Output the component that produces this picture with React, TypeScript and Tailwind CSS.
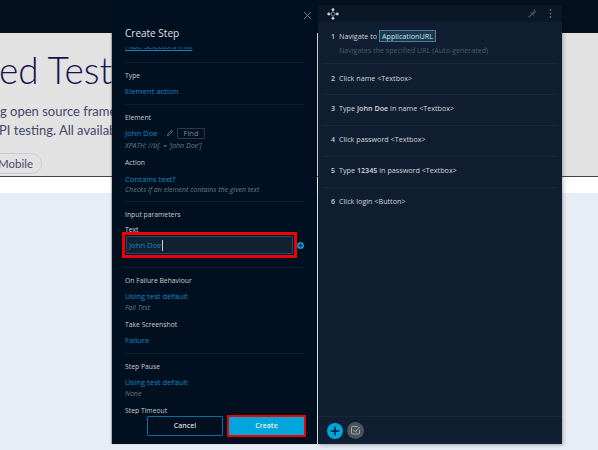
import React from "react";

const sans = "font-['Open_Sans','Noto_Sans',sans-serif]";

function Label({ children, className = "" }: { children: React.ReactNode; className?: string }) {
  return <div className={`text-[6.8px] leading-[12px] text-[#c6cbd0] whitespace-nowrap ${className}`}>{children}</div>;
}
function Value({ children, className = "" }: { children: React.ReactNode; className?: string }) {
  return <div className={`text-[7.7px] leading-[14px] text-[#0a8ac0] whitespace-nowrap ${className}`}>{children}</div>;
}
function Hint({ children, className = "" }: { children: React.ReactNode; className?: string }) {
  return <div className={`text-[7px] leading-[11px] italic text-[#6f7a85] whitespace-nowrap ${className}`}>{children}</div>;
}
function Rule({ className = "" }: { className?: string }) {
  return <div className={`h-px bg-[#0f2031] ${className}`} />;
}

function Step({ n, children, sub, className = "" }: { n: number; children: React.ReactNode; sub?: string; className?: string }) {
  return (
    <div className={`flex mx-[4px] pl-[9px] border-b border-[#16283a] ${className}`}>
      <div className="w-[8px] text-[7px] font-semibold leading-[13px] text-[#c9ced3]">{n}</div>
      <div className="min-w-0">
        <div className="text-[7.2px] leading-[13px] text-[#d3d7db] whitespace-nowrap">{children}</div>
        {sub && <div className="mt-[1px] text-[7.1px] leading-[12px] text-[#4c5a68] whitespace-nowrap">{sub}</div>}
      </div>
    </div>
  );
}

export default function App() {
  return (
    <div className={`relative w-[598px] h-[450px] overflow-hidden bg-[#e6edf6] ${sans}`}>
      {/* page behind the panels */}
      <div className="h-[33px] bg-[#04121f]" />
      <div className="h-[143px] bg-[#e2e2e2] overflow-hidden font-['Lato',sans-serif]">
        <div className="-ml-[1px] mt-[17px] text-[37px] leading-[40px] font-light text-[#17134f] whitespace-nowrap">ed Test</div>
        <div className="mt-[12px] text-[13px] leading-[19px] text-[#46466a] whitespace-nowrap">g open source framework</div>
        <div className="-ml-[1px] text-[13px] leading-[19px] text-[#46466a] whitespace-nowrap">PI testing. All available</div>
        <div className="mt-[13px] -ml-[30px] w-[72px] h-[21px] rounded-full border border-[#c9ccd6] pr-[8px] text-right text-[11.5px] leading-[19px] text-[#46466a]">Mobile</div>
      </div>
      <div className="h-px bg-[#3b4450]" />
      <div className="h-[16px] bg-white" />

      {/* create step modal */}
      <div className="absolute left-[112px] top-0 w-[205px] h-[444px] bg-[#001020] shadow-[-1px_0_1px_rgba(0,0,0,0.25)] flex flex-col">
        <div className="relative h-[47px] shrink-0 pl-[13px] pt-[25px] text-[10px] leading-[17px] text-[#dfe3e7]">
          Create Step
          <svg className="absolute right-[5px] top-[11px]" width="9" height="9" viewBox="0 0 9 9" fill="none" stroke="#9aa5af" strokeWidth="0.7"><path d="M1 1l7 7M8 1L1 8" /></svg>
        </div>
        <div className="flex-1 min-h-0 overflow-hidden px-[13px]">
          <div className="h-[5px] overflow-hidden">
            <div className="-mt-[7px] text-[7.7px] leading-[12px] text-[#0a8ac0] underline">Hide Selectors Info</div>
          </div>
          <Rule className="mt-[10px]" />
          <Label className="mt-[7px]">Type</Label>
          <Value className="mt-[2px]">Element action</Value>
          <Rule className="mt-[6px]" />
          <Label className="mt-[7px]">Element</Label>
          <div className="mt-[2px] flex items-center h-[14px]">
            <Value className="w-[41px]">John Doe</Value>
            <svg width="8" height="8" viewBox="0 0 8 8" fill="none" stroke="#7f8a95" strokeWidth="0.7"><path d="M1.5 6.8l.3-1.6L5.4 1.3l1.2 1.1L3 6.2zM4.6 2.2l1.2 1.1" /></svg>
            <div className="ml-[3px] w-[28px] h-[11px] border border-[#2b3a48] rounded-[1px] text-center text-[7.5px] leading-[9px] text-[#7d8892]">Find</div>
          </div>
          <Hint>XPATH: //b[. = 'John Doe']</Hint>
          <Label className="mt-[6px]">Action</Label>
          <Value className="mt-[3px]">Contains text?</Value>
          <Hint className="-mt-[2px]">Checks if an element contains the given text</Hint>
          <Rule className="mt-[6px]" />
          <Label className="mt-[7px]">Input parameters</Label>
          <Label className="mt-[3px] text-[#d3d7da]">Text</Label>
          <div className="relative -mt-[4px] -mx-[3px] w-[175px] h-[26px] border-[3px] border-[#f00000] p-[1px]">
            <div className="h-full w-[167px] bg-[#12212f] border border-[#1d4a7c] pl-[2px] text-[7.7px] leading-[14px] text-[#0a8ac0] flex items-center">
              John Doe<span className="w-px h-[11px] bg-[#c8d0d8]" />
            </div>
            <svg className="absolute -right-[10px] top-[7px]" width="7" height="7" viewBox="0 0 7 7"><circle cx="3.5" cy="3.5" r="3.5" fill="#0a95cf" /><path d="M3.5 1.5v4M1.5 3.5h4" stroke="#001020" strokeWidth="0.8" /></svg>
          </div>
          <Rule className="mt-[9px]" />
          <Label className="mt-[7px]">On Failure Behaviour</Label>
          <Value className="mt-[2px]">Using test default</Value>
          <Hint className="-mt-[1px]">Fail Test</Hint>
          <Label className="mt-[6px]">Take Screenshot</Label>
          <Value className="mt-[2px]">Failure</Value>
          <Rule className="mt-[6px]" />
          <Label className="mt-[7px]">Step Pause</Label>
          <Value className="mt-[2px]">Using test default</Value>
          <Hint className="-mt-[1px]">None</Hint>
          <Label className="mt-[6px]">Step Timeout</Label>
        </div>
        <div className="h-[30px] shrink-0 flex items-start pl-[35px] bg-[#001020]">
          <div className="mt-[2px] w-[76px] h-[20px] border border-[#0a6f9c] rounded-[1px] text-center text-[7px] leading-[18px] font-semibold text-[#d5dade]">Cancel</div>
          <div className="ml-[4px] mt-[1px] w-[79px] h-[22px] border-[2px] border-[#f00000] bg-[#00a5dc] text-center text-[7px] leading-[18px] font-semibold text-[#e8f6fb]">Create</div>
        </div>
      </div>

      {/* step list panel */}
      <div className="absolute left-[318px] top-[5px] w-[244px] h-[439px] bg-[#0f1e30] shadow-[1px_1px_4px_rgba(0,0,0,0.3)] flex flex-col">
        <div className="h-[17px] shrink-0 bg-[#091727] flex items-center px-[9px] justify-between">
          <svg width="12" height="12" viewBox="0 0 12 12" fill="#cfd4d9"><circle cx="6" cy="1.7" r="1.4" /><circle cx="6" cy="10.3" r="1.4" /><circle cx="1.7" cy="6" r="1.4" /><circle cx="10.3" cy="6" r="1.4" /><path d="M6 3.5L8.5 6 6 8.5 3.5 6z" fill="none" stroke="#cfd4d9" strokeWidth="0.7" /></svg>
          <div className="flex items-center gap-[12px] pr-[1px]">
            <svg width="9" height="9" viewBox="0 0 9 9" fill="none" stroke="#45525f" strokeWidth="1.1"><path d="M0.5 8.5l3-3M2.5 3.5l3 3M4.5 4.5l2.5-4M5 5l3-2.5" /></svg>
            <svg width="3" height="9" viewBox="0 0 3 9" fill="#5d6a76"><circle cx="1.5" cy="1" r="0.9" /><circle cx="1.5" cy="4.5" r="0.9" /><circle cx="1.5" cy="8" r="0.9" /></svg>
          </div>
        </div>
        <div className="flex-1 min-h-0 pt-[8px]">
          <Step n={1} sub="Navigates the specified URL (Auto-generated)" className="h-[34px]">
            <span className="font-medium">Navigate to</span>{" "}
            <span className="inline-block h-[12px] leading-[10px] px-[2px] border border-[#4d7d98] bg-[#173a4f] text-[#cfe0ea] text-[7.2px]">ApplicationURL</span>
          </Step>
          <Step n={2} className="h-[31px] pt-[8px]">Click name &lt;Textbox&gt;</Step>
          <Step n={3} className="h-[31px] pt-[7px]">Type <b className="font-semibold">John Doe</b> in name &lt;Textbox&gt;</Step>
          <Step n={4} className="h-[31px] pt-[7px]">Click password &lt;Textbox&gt;</Step>
          <Step n={5} className="h-[31px] pt-[7px]">Type <b className="font-semibold">12345</b> in password &lt;Textbox&gt;</Step>
          <Step n={6} className="h-[31px] pt-[7px] border-b-0">Click login &lt;Button&gt;</Step>
        </div>
        <div className="h-[28px] shrink-0 border-t border-[#16283a] flex items-center pl-[9px] gap-[4px]">
          <svg width="16" height="16" viewBox="0 0 16 16"><circle cx="8" cy="8" r="8" fill="#00a5dc" /><path d="M8 3.8v8.4M3.8 8h8.4" stroke="#0a1a2b" strokeWidth="1.4" /></svg>
          <svg width="17" height="17" viewBox="0 0 17 17"><circle cx="8.5" cy="8.5" r="8.5" fill="#4a545f" /><path d="M12.5 8v3a1 1 0 0 1-1 1h-6a1 1 0 0 1-1-1V5.5a1 1 0 0 1 1-1h5" fill="none" stroke="#b8bec4" strokeWidth="0.8" /><path d="M6.5 8l1.8 1.8 4.4-5" fill="none" stroke="#b8bec4" strokeWidth="0.8" /></svg>
        </div>
      </div>
    </div>
  );
}
